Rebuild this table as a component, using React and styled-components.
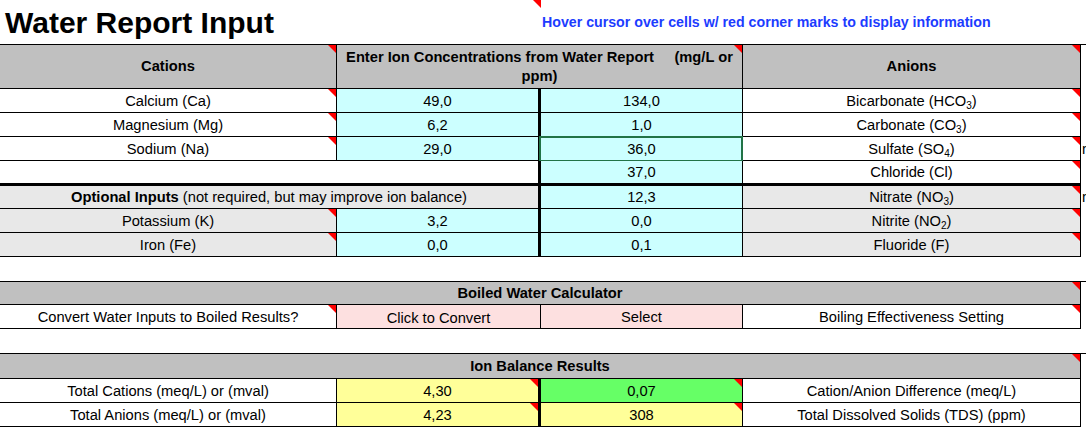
import React from 'react'
import styled, { createGlobalStyle, css } from 'styled-components'

const GlobalStyle = createGlobalStyle`
  html, body {
    margin: 0;
    overflow: hidden;
    background: #fff;
  }
  body {
    font-family: 'Liberation Sans', Arial, sans-serif;
    font-size: 14.7px;
    color: #000;
  }
`

const COLS = '337px 204px 202px 338px'

const Page = styled.div`
  width: 1086px;
  display: flex;
  flex-direction: column;
`

const TitleRow = styled.div`
  display: grid;
  grid-template-columns: ${COLS};
  height: 44px;
`

const Title = styled.h1`
  margin: 0;
  padding: 8px 0 0 5px;
  font-size: 30px;
  line-height: 30px;
  font-weight: 700;
  white-space: nowrap;
`

const Corner = css`
  &::after {
    content: '';
    position: absolute;
    top: 0;
    right: 0;
    border-top: 8px solid #ff0000;
    border-left: 8px solid transparent;
  }
`

const Blank = styled.div`
  position: relative;
  ${p => p.$mark && Corner}
`

const Note = styled.div`
  grid-column: span 2;
  padding: 15px 0 0 1px;
  font-size: 14.2px;
  line-height: 14px;
  font-weight: 700;
  color: #1c3cff;
  white-space: nowrap;
`

const Block = styled.div`
  display: grid;
  grid-template-columns: ${COLS};
  grid-template-rows: ${p => p.$rows};
  border-top: 1px solid #000;
  margin-top: ${p => p.$gap || 0}px;
`

const Cell = styled.div`
  position: relative;
  box-sizing: border-box;
  display: flex;
  align-items: center;
  justify-content: center;
  grid-column: span ${p => p.$span || 1};
  background: ${p => p.$bg || '#fff'};
  border-right: ${p => (p.$thick ? 3 : 1)}px solid #000;
  border-bottom: ${p => (p.$heavy ? 3 : 1)}px solid #000;
  font-weight: ${p => (p.$bold ? 700 : 400)};
  padding-top: ${p => p.$drop || 0}px;
  white-space: nowrap;
  ${p => p.$mark && Corner}
`

const HeadCell = styled(Cell)`
  padding: 0 4px;
  white-space: pre-wrap;
  text-align: center;
  line-height: 19px;
`

const Selected = styled(Cell)`
  &::before {
    content: '';
    position: absolute;
    top: -1px;
    left: -2px;
    right: -1px;
    bottom: -2px;
    border: 2px solid #217346;
  }
  &::after {
    content: '';
    position: absolute;
    right: -4px;
    bottom: -5px;
    width: 5px;
    height: 5px;
    background: #217346;
  }
`

const Label = styled.span`
  white-space: nowrap;
`

const Sub = styled.sub`
  font-size: 10px;
  line-height: 0;
  vertical-align: -3px;
`

const Spill = styled.span`
  position: absolute;
  left: calc(100% + 2px);
  top: 50%;
  transform: translateY(-50%);
`

const CYAN = '#ccffff'
const GRAY = '#c0c0c0'
const LIGHT = '#e8e8e8'
const PINK = '#fde0e0'
const YELLOW = '#ffff99'
const GREEN = '#66ff66'

const ions = [
  { cation: 'Calcium (Ca)', a: '49,0', b: '134,0', anion: <>Bicarbonate (HCO<Sub>3</Sub>)</> },
  { cation: 'Magnesium (Mg)', a: '6,2', b: '1,0', anion: <>Carbonate (CO<Sub>3</Sub>)</> },
  { cation: 'Sodium (Na)', a: '29,0', b: '36,0', anion: <>Sulfate (SO<Sub>4</Sub>)</>, selected: true, spill: true },
]

const optional = [
  { cation: 'Potassium (K)', a: '3,2', b: '0,0', anion: <>Nitrite (NO<Sub>2</Sub>)</> },
  { cation: 'Iron (Fe)', a: '0,0', b: '0,1', anion: 'Fluoride (F)' },
]

export default function App() {
  return (
    <Page>
      <GlobalStyle />
      <TitleRow>
        <Title>Water Report Input</Title>
        <Blank $mark />
        <Note>Hover cursor over cells w/ red corner marks to display information</Note>
      </TitleRow>

      <Block $rows="44px 24px 24px 24px 25px 23px 24px 24px">
        <HeadCell $bg={GRAY} $bold $mark>Cations</HeadCell>
        <HeadCell $bg={GRAY} $bold $span={2} $mark>
          {'Enter Ion Concentrations from Water Report     (mg/L or ppm)'}
        </HeadCell>
        <HeadCell $bg={GRAY} $bold $mark>Anions</HeadCell>

        {ions.map(row => {
          const Value = row.selected ? Selected : Cell
          return (
            <React.Fragment key={row.cation}>
              <Cell $mark>{row.cation}</Cell>
              <Cell $bg={CYAN} $thick>{row.a}</Cell>
              <Value $bg={CYAN}>{row.b}</Value>
              <Cell $mark>
                <Label>{row.anion}</Label>
                {row.spill && <Spill>mg/L</Spill>}
              </Cell>
            </React.Fragment>
          )
        })}

        <Cell $span={2} $thick $heavy />
        <Cell $bg={CYAN} $heavy>37,0</Cell>
        <Cell $heavy $mark>Chloride (Cl)</Cell>

        <Cell $span={2} $thick $bg={LIGHT}>
          <Label><b>Optional Inputs</b> (not required, but may improve ion balance)</Label>
        </Cell>
        <Cell $bg={CYAN}>12,3</Cell>
        <Cell $bg={LIGHT} $mark>
          <Label>Nitrate (NO<Sub>3</Sub>)</Label>
          <Spill>mg/L</Spill>
        </Cell>

        {optional.map(row => (
          <React.Fragment key={row.cation}>
            <Cell $bg={LIGHT} $mark>{row.cation}</Cell>
            <Cell $bg={CYAN} $thick>{row.a}</Cell>
            <Cell $bg={CYAN}>{row.b}</Cell>
            <Cell $bg={LIGHT} $mark><Label>{row.anion}</Label></Cell>
          </React.Fragment>
        ))}
      </Block>

      <Block $rows="23px 24px" $gap={24}>
        <Cell $span={4} $bg={GRAY} $bold $mark>Boiled Water Calculator</Cell>
        <Cell $mark>Convert Water Inputs to Boiled Results?</Cell>
        <Cell $bg={PINK} $drop={2}>Click to Convert</Cell>
        <Cell $bg={PINK}>Select</Cell>
        <Cell $mark>Boiling Effectiveness Setting</Cell>
      </Block>

      <Block $rows="25px 24px 24px" $gap={24}>
        <Cell $span={4} $bg={GRAY} $bold $mark>Ion Balance Results</Cell>
        <Cell>Total Cations (meq/L) or (mval)</Cell>
        <Cell $bg={YELLOW} $thick $mark>4,30</Cell>
        <Cell $bg={GREEN} $mark>0,07</Cell>
        <Cell>Cation/Anion Difference (meq/L)</Cell>
        <Cell>Total Anions (meq/L) or (mval)</Cell>
        <Cell $bg={YELLOW} $thick $mark>4,23</Cell>
        <Cell $bg={YELLOW} $mark>308</Cell>
        <Cell>Total Dissolved Solids (TDS) (ppm)</Cell>
      </Block>
    </Page>
  )
}
